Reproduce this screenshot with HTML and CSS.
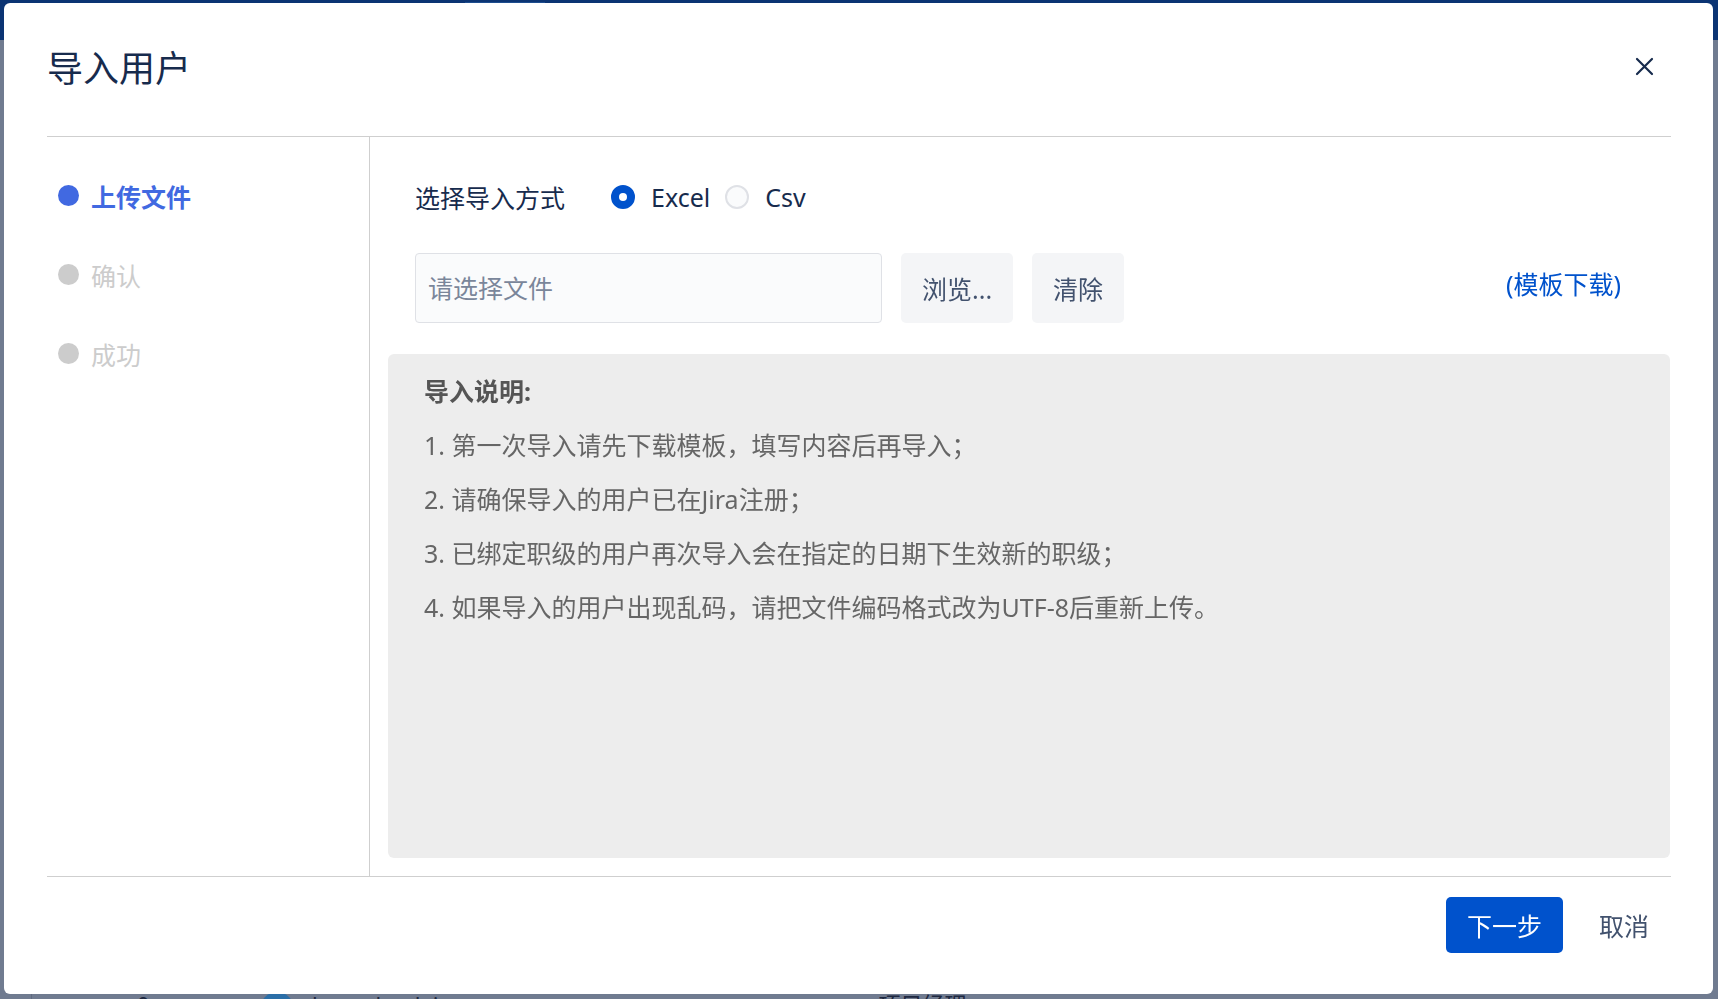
FILE: index.html
```html
<!DOCTYPE html>
<html lang="zh-CN">
<head>
    <meta charset="UTF-8">
    <meta name="viewport" content="width=device-width, initial-scale=1.0">
    <title>导入用户</title>
    <link rel="stylesheet" href="styles.css">
</head>
<body>
    <!-- page behind the modal -->
    <div class="page">
        <div class="topbar">
            <span class="tab">消息 ✕</span>
            <span class="tab">角色 ✕</span>
            <span class="tab">Timesheet ✕</span>
            <span class="tab tab-current">用户</span>
        </div>
        <div class="page-row">
            <span class="cell-num">0</span>
            <span class="avatar"></span>
            <span class="cell-name">zhangshaolei</span>
            <span class="cell-role">项目经理</span>
        </div>
    </div>

    <div class="dialog">
        <div class="dialog-header">
            <h1>导入用户</h1>
            <button class="close-btn" aria-label="关闭">
                <svg width="19" height="19" viewBox="0 0 19 19">
                    <path d="M2 2 L17 17 M17 2 L2 17" stroke="#172b4d" stroke-width="2.2" stroke-linecap="round" fill="none"/>
                </svg>
            </button>
        </div>

        <div class="dialog-body">
            <div class="steps">
                <div class="step active"><span class="dot"></span>上传文件</div>
                <div class="step"><span class="dot"></span>确认</div>
                <div class="step"><span class="dot"></span>成功</div>
            </div>

            <div class="content">
                <div class="method-row">
                    <span class="method-label">选择导入方式</span>
                    <div class="radio-group">
                        <label class="radio checked"><span class="circle"></span>Excel</label>
                        <label class="radio"><span class="circle"></span>Csv</label>
                    </div>
                </div>

                <div class="file-row">
                    <input type="text" class="file-input" placeholder="请选择文件" readonly>
                    <button class="btn-subtle">浏览...</button>
                    <button class="btn-subtle">清除</button>
                    <a href="#" class="template-link">(模板下载)</a>
                </div>

                <div class="notes">
                    <div class="notes-title">导入说明:</div>
                    <div class="notes-item">1. 第一次导入请先下载模板，填写内容后再导入；</div>
                    <div class="notes-item">2. 请确保导入的用户已在Jira注册；</div>
                    <div class="notes-item">3. 已绑定职级的用户再次导入会在指定的日期下生效新的职级；</div>
                    <div class="notes-item">4. 如果导入的用户出现乱码，请把文件编码格式改为UTF-8后重新上传。</div>
                </div>
            </div>
        </div>

        <div class="dialog-footer">
            <button class="btn-primary">下一步</button>
            <button class="btn-cancel">取消</button>
        </div>
    </div>
</body>
</html>
```

FILE: styles.css
```css
* {
    box-sizing: border-box;
    margin: 0;
    padding: 0;
}

body {
    font-family: "Noto Sans", "Noto Sans CJK SC", sans-serif;
    width: 1718px;
    height: 999px;
    overflow: hidden;
    background-color: #707b90;
    color: #172b4d;
}

/* Backdrop page (dimmed) */
.page {
    height: 100%;
    border-left: 1px solid #5f6a80;
    margin-left: 31px;
}

.topbar {
    height: 40px;
    margin-left: -32px;
    background-color: #0b3473;
    display: flex;
    gap: 60px;
    padding: 2px 0 0 40px;
}

.tab {
    font-size: 20px;
    color: #5d6f95;
    line-height: 24px;
}

.tab-current {
    background-color: #1d4d8f;
    padding: 0 20px;
}

.page-row {
    margin-top: 952px;
    display: flex;
    align-items: flex-start;
    font-size: 22px;
    color: #1d2840;
    line-height: 24px;
}

.cell-num {
    margin-left: 105px;
}

.avatar {
    width: 34px;
    height: 34px;
    border-radius: 50%;
    background-color: #2b6fa8;
    margin-left: 110px;
}

.cell-name {
    margin-left: 8px;
}

.cell-role {
    margin-left: 440px;
}

/* Modal */
.dialog {
    position: fixed;
    left: 4px;
    top: 3px;
    width: 1709px;
    height: 991px;
    background-color: #fff;
    border-radius: 6px;
    padding: 0 42px 0 43px;
    display: flex;
    flex-direction: column;
}

.dialog-header {
    height: 134px;
    padding-bottom: 7px;
    border-bottom: 1px solid #cfcfcf;
    display: flex;
    align-items: center;
    justify-content: space-between;
}

.dialog-header h1 {
    font-size: 36px;
    font-weight: 400;
    color: #172b4d;
}

.close-btn {
    width: 40px;
    height: 40px;
    margin-right: 7px;
    border: none;
    background: none;
    display: flex;
    align-items: center;
    justify-content: center;
    cursor: pointer;
}

.dialog-body {
    height: 739px;
    display: flex;
}

.steps {
    width: 323px;
    border-right: 1px solid #cfcfcf;
    padding: 19px 0 0 11px;
}

.step {
    height: 79px;
    display: flex;
    align-items: center;
    gap: 12px;
    font-size: 25px;
    color: #cccccc;
}

.step .dot {
    width: 21px;
    height: 21px;
    border-radius: 50%;
    background-color: #cccccc;
}

.step.active {
    color: #4169e1;
    font-weight: 700;
}

.step.active .dot {
    background-color: #4169e1;
}

.content {
    flex: 1;
    padding: 0 1px 18px 18px;
    display: flex;
    flex-direction: column;
}

.method-row {
    margin-top: 40px;
    height: 40px;
    padding-left: 27px;
    display: flex;
    align-items: center;
    font-size: 25px;
}

.radio-group {
    margin-left: 46px;
    display: flex;
    align-items: center;
}

.radio {
    display: flex;
    align-items: center;
    color: #172b4d;
    cursor: pointer;
}

.radio + .radio {
    margin-left: 15px;
}

.radio .circle {
    width: 24px;
    height: 24px;
    border-radius: 50%;
    border: 2px solid #dfe1e6;
    background-color: #fafbfc;
    margin-right: 16px;
    display: flex;
    align-items: center;
    justify-content: center;
}

.radio.checked .circle {
    border-color: #0052cc;
    background-color: #0052cc;
}

.radio.checked .circle::after {
    content: "";
    width: 8px;
    height: 8px;
    border-radius: 50%;
    background-color: #fff;
}

.file-row {
    margin-top: 36px;
    height: 70px;
    padding-left: 27px;
    display: flex;
    align-items: center;
}

.file-input {
    width: 467px;
    height: 70px;
    border: 1px solid #dfe1e6;
    border-radius: 4px;
    background-color: #fafbfc;
    padding: 0 12px;
    font-family: inherit;
    font-size: 25px;
    color: #172b4d;
    outline: none;
}

.file-input::placeholder {
    color: #7a869a;
}

.btn-subtle {
    height: 70px;
    margin-left: 19px;
    padding: 0 21px;
    border: none;
    border-radius: 5px;
    background-color: #f4f5f7;
    color: #42526e;
    font-family: inherit;
    font-size: 25px;
    cursor: pointer;
}

.template-link {
    margin-left: auto;
    margin-right: 49px;
    margin-bottom: 10px;
    color: #0052cc;
    font-size: 25px;
    text-decoration: none;
}

.notes {
    flex: 1;
    margin-top: 31px;
    background-color: #ededed;
    border-radius: 6px;
    padding: 10px 36px;
    font-size: 25px;
    line-height: 54px;
    color: #666;
}

.notes-title {
    font-weight: 700;
    color: #555;
}

.dialog-footer {
    flex: 1;
    border-top: 1px solid #cfcfcf;
    padding-top: 20px;
    display: flex;
    justify-content: flex-end;
    align-items: flex-start;
}

.btn-primary {
    height: 56px;
    padding: 0 21px;
    border: none;
    border-radius: 5px;
    background-color: #0052cc;
    color: #fff;
    font-family: inherit;
    font-size: 25px;
    cursor: pointer;
}

.btn-cancel {
    height: 56px;
    margin-left: 14px;
    padding: 0 22px;
    border: none;
    background: none;
    color: #42526e;
    font-family: inherit;
    font-size: 25px;
    cursor: pointer;
}
```
